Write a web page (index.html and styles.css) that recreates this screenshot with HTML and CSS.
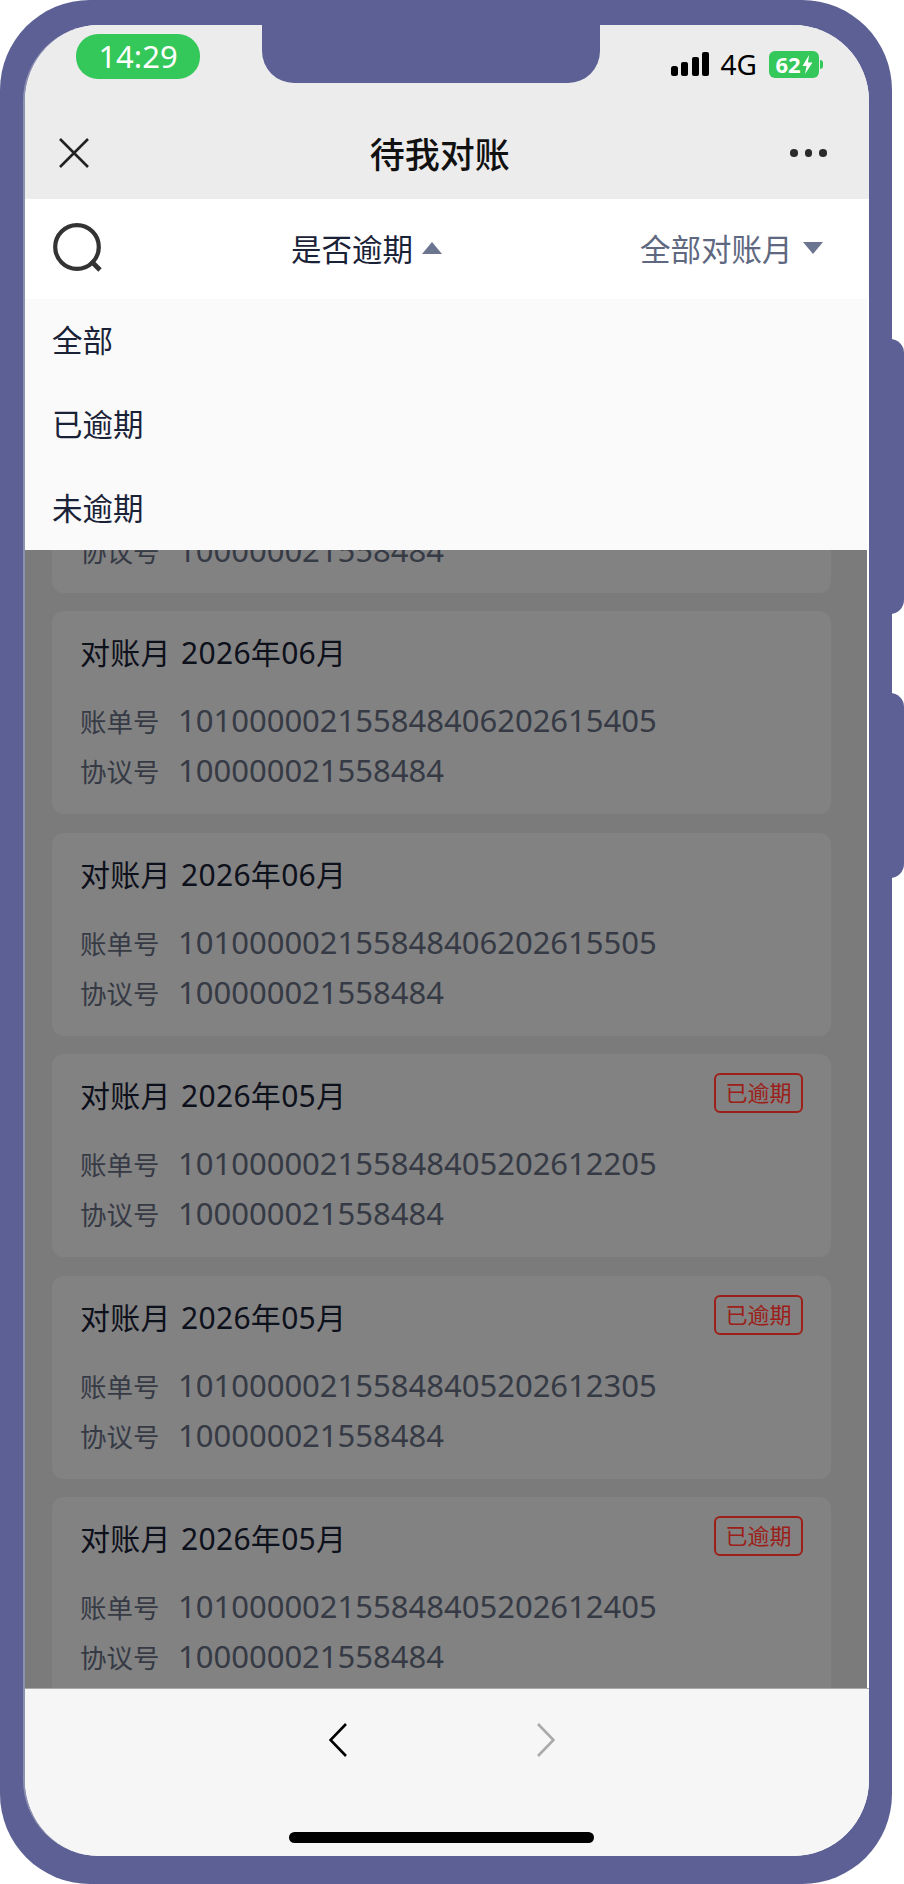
FILE: index.html
```html
<!DOCTYPE html>
<html lang="zh-CN">
<head>
    <meta charset="UTF-8">
    <meta name="viewport" content="width=device-width, initial-scale=1.0">
    <title>待我对账</title>
    <link rel="stylesheet" href="styles.css">
</head>
<body>
    <div class="phone">
        <div class="side-key side-key-top"></div>
        <div class="side-key side-key-bottom"></div>
        <div class="notch"></div>

        <div class="screen">
            <div class="status-bar">
                <div class="time-pill">14:29</div>
                <div class="status-right">
                    <svg class="signal" width="38" height="24" viewBox="0 0 38 24">
                        <rect x="0" y="14" width="7" height="10" rx="2.5"/>
                        <rect x="10" y="10" width="7" height="14" rx="2"/>
                        <rect x="21" y="5" width="7" height="19" rx="2"/>
                        <rect x="31" y="0" width="7" height="24" rx="2"/>
                    </svg>
                    <span class="network">4G</span>
                    <div class="battery">
                        <span class="battery-num">62</span>
                        <svg width="11" height="19" viewBox="0 0 11 19">
                            <path d="M7 0 L0.5 11 H4.5 L3 19 L10.5 7.5 H6 Z" fill="#fff"/>
                        </svg>
                    </div>
                    <div class="battery-tip"></div>
                </div>
            </div>

            <div class="nav-bar">
                <svg class="nav-close" width="30" height="30" viewBox="0 0 30 30">
                    <path d="M1 1 L29 29 M29 1 L1 29" stroke="#222" stroke-width="2.6" fill="none"/>
                </svg>
                <h1 class="nav-title">待我对账</h1>
                <div class="nav-more"><i></i><i></i><i></i></div>
            </div>

            <div class="filter-bar">
                <svg class="search-icon" width="50" height="50" viewBox="0 0 50 50">
                    <circle cx="24" cy="24" r="21.8" stroke="#333" stroke-width="4.2" fill="none"/>
                    <path d="M38 38 L47 47" stroke="#333" stroke-width="4.8" fill="none"/>
                </svg>
                <div class="filter filter-active">是否逾期<span class="arrow-up"></span></div>
                <div class="filter">全部对账月<span class="arrow-down"></span></div>
            </div>

            <div class="content">
                <div class="bill-list">
                    <div class="bill-card bill-card-partial">
                        <div class="bill-row"><span class="bill-label">协议号</span><span class="bill-value">100000021558484</span></div>
                    </div>
                    <div class="bill-card">
                        <div class="bill-head"><div class="bill-title">对账月 2026年06月</div></div>
                        <div class="bill-row"><span class="bill-label">账单号</span><span class="bill-value">101000002155848406202615405</span></div>
                        <div class="bill-row"><span class="bill-label">协议号</span><span class="bill-value">100000021558484</span></div>
                    </div>
                    <div class="bill-card">
                        <div class="bill-head"><div class="bill-title">对账月 2026年06月</div></div>
                        <div class="bill-row"><span class="bill-label">账单号</span><span class="bill-value">101000002155848406202615505</span></div>
                        <div class="bill-row"><span class="bill-label">协议号</span><span class="bill-value">100000021558484</span></div>
                    </div>
                    <div class="bill-card">
                        <div class="bill-head"><div class="bill-title">对账月 2026年05月</div><span class="overdue-tag">已逾期</span></div>
                        <div class="bill-row"><span class="bill-label">账单号</span><span class="bill-value">101000002155848405202612205</span></div>
                        <div class="bill-row"><span class="bill-label">协议号</span><span class="bill-value">100000021558484</span></div>
                    </div>
                    <div class="bill-card">
                        <div class="bill-head"><div class="bill-title">对账月 2026年05月</div><span class="overdue-tag">已逾期</span></div>
                        <div class="bill-row"><span class="bill-label">账单号</span><span class="bill-value">101000002155848405202612305</span></div>
                        <div class="bill-row"><span class="bill-label">协议号</span><span class="bill-value">100000021558484</span></div>
                    </div>
                    <div class="bill-card">
                        <div class="bill-head"><div class="bill-title">对账月 2026年05月</div><span class="overdue-tag">已逾期</span></div>
                        <div class="bill-row"><span class="bill-label">账单号</span><span class="bill-value">101000002155848405202612405</span></div>
                        <div class="bill-row"><span class="bill-label">协议号</span><span class="bill-value">100000021558484</span></div>
                    </div>
                </div>
                <div class="mask"></div>
                <div class="dropdown">
                    <div class="dropdown-item">全部</div>
                    <div class="dropdown-item">已逾期</div>
                    <div class="dropdown-item">未逾期</div>
                </div>
            </div>

            <div class="toolbar">
                <svg width="18" height="34" viewBox="0 0 18 34">
                    <path d="M17 1 L1.5 17 L17 33" stroke="#000" stroke-width="2.6" fill="none"/>
                </svg>
                <svg width="18" height="34" viewBox="0 0 18 34">
                    <path d="M1 1 L16.5 17 L1 33" stroke="#aaa" stroke-width="2.6" fill="none"/>
                </svg>
                <div class="home-bar"></div>
            </div>
        </div>
    </div>
</body>
</html>
```

FILE: styles.css
```css
:root {
    --frame-color: #5c6094;
    --title-color: #1a2238;
    --muted-color: #5e6880;
}

* {
    margin: 0;
    padding: 0;
    box-sizing: border-box;
}

body {
    font-family: 'Noto Sans', 'Noto Sans CJK SC', sans-serif;
    background: #fff;
    width: 904px;
    height: 1884px;
    overflow: hidden;
}

.phone {
    position: relative;
    width: 892px;
    height: 1884px;
    padding: 25px 23px 28px 23px;
    background: var(--frame-color);
    border-radius: 90px;
}

.side-key {
    position: absolute;
    left: 880px;
    width: 24px;
    background: var(--frame-color);
    border-radius: 0 14px 14px 0;
}

.side-key-top {
    top: 339px;
    height: 275px;
}

.side-key-bottom {
    top: 693px;
    height: 185px;
}

.notch {
    position: absolute;
    z-index: 2;
    top: 25px;
    left: 262px;
    width: 338px;
    height: 58px;
    background: var(--frame-color);
    border-radius: 0 0 32px 32px;
}

.screen {
    display: flex;
    flex-direction: column;
    height: 100%;
    background: #fff;
    border-left: 2px solid #8f91b3;
    border-radius: 76px;
    overflow: hidden;
}

.status-bar {
    display: flex;
    justify-content: space-between;
    align-items: flex-start;
    height: 82px;
    padding: 9px 46px 0 51px;
    background: #ececec;
}

.time-pill {
    width: 124px;
    height: 45px;
    border-radius: 22px;
    background: #34c759;
    color: #fff;
    font-size: 31px;
    line-height: 45px;
    text-align: center;
}

.status-right {
    display: flex;
    align-items: center;
    margin-top: 17px;
    height: 26px;
}

.signal {
    fill: #000;
}

.network {
    margin-left: 12px;
    font-size: 28px;
    line-height: 26px;
    color: #000;
}

.battery {
    display: flex;
    align-items: center;
    justify-content: center;
    gap: 1px;
    width: 50px;
    height: 27px;
    margin-left: 12px;
    background: #34c759;
    border-radius: 6px;
}

.battery-num {
    color: #fff;
    font-size: 22px;
    font-weight: bold;
    line-height: 27px;
}

.battery-tip {
    width: 3px;
    height: 9px;
    margin-left: 1px;
    background: #34c759;
    border-radius: 0 3px 3px 0;
}

.nav-bar {
    display: flex;
    justify-content: space-between;
    align-items: center;
    height: 92px;
    padding: 0 42px 2px 34px;
    background: #ececec;
}

.nav-close {
    margin-top: 2px;
}

.nav-more {
    display: flex;
    gap: 7px;
    margin-top: 2px;
}

.nav-title {
    font-size: 35px;
    font-weight: 500;
    color: #111;
}

.nav-more i {
    display: block;
    width: 7.5px;
    height: 7.5px;
    border-radius: 50%;
    background: #2b2b2b;
}

.filter-bar {
    display: grid;
    grid-template-columns: 238px 349px auto;
    align-items: center;
    height: 100px;
    padding: 0 0 2px 28px;
    background: #fff;
}

.filter {
    display: flex;
    align-items: center;
    font-size: 30.5px;
    color: var(--muted-color);
}

.filter-active {
    color: var(--title-color);
}

.arrow-up,
.arrow-down {
    width: 0;
    height: 0;
    margin-left: 9px;
    border-left: 10px solid transparent;
    border-right: 10px solid transparent;
}

.arrow-up {
    border-bottom: 12px solid #6b7590;
}

.arrow-down {
    margin-left: 10px;
    border-top: 12px solid #6b7590;
}

.content {
    position: relative;
    flex: 1;
    margin-right: 2px;
    overflow: hidden;
    background: #f2f2f2;
}

.bill-list {
    padding: 91px 36px 0 27px;
}

.bill-card {
    height: 203px;
    margin-bottom: 18.4px;
    padding: 19px 28px 0;
    background: #fff;
    border-radius: 12px;
}

.bill-card-partial {
    display: flex;
    align-items: flex-end;
    padding-bottom: 18px;
}

.bill-head {
    display: flex;
    justify-content: space-between;
    align-items: flex-start;
    height: 46px;
    margin-bottom: 19px;
}

.bill-title {
    font-size: 30px;
    line-height: 46px;
    letter-spacing: 0.3px;
    word-spacing: 2px;
    color: var(--title-color);
}

.overdue-tag {
    position: relative;
    z-index: 1;
    width: 89px;
    height: 40px;
    border: 2px solid #9c2019;
    border-radius: 6px;
    color: #9c2019;
    font-size: 22px;
    line-height: 35px;
    text-align: center;
}

.bill-row {
    display: flex;
    align-items: baseline;
    height: 50px;
    line-height: 50px;
    color: #6a7388;
}

.bill-label {
    width: 98px;
    font-size: 26.5px;
}

.bill-value {
    font-size: 31px;
}

.mask {
    position: absolute;
    top: 0;
    left: 0;
    right: 0;
    bottom: 0;
    background: rgba(0, 0, 0, 0.49);
}

.dropdown {
    position: absolute;
    z-index: 2;
    top: 0;
    left: 0;
    right: -2px;
    display: flex;
    flex-direction: column;
    height: 251px;
    background: #fafafa;
}

.dropdown-item {
    flex: 1;
    display: flex;
    align-items: center;
    padding: 0 0 3px 27px;
    font-size: 30.5px;
    color: var(--title-color);
}

.toolbar {
    position: relative;
    display: flex;
    justify-content: center;
    gap: 190px;
    height: 168px;
    padding: 34px 11px 0 0;
    border-top: 1px solid #a8a8a8;
    background: #f6f6f6;
}

.home-bar {
    position: absolute;
    left: 264px;
    top: 143px;
    width: 305px;
    height: 11px;
    border-radius: 6px;
    background: #000;
}
```
